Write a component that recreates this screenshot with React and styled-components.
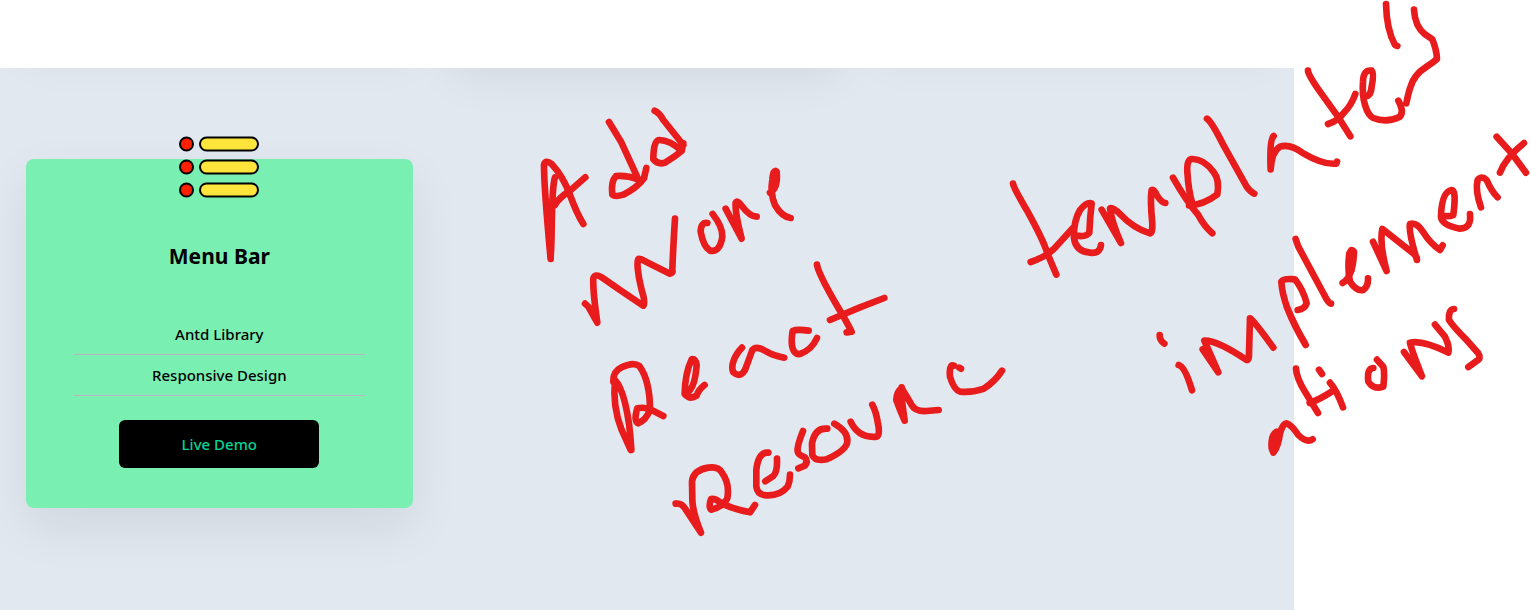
import React from "react";
import styled, { createGlobalStyle } from "styled-components";

const GlobalStyle = createGlobalStyle`
  *, *::before, *::after { box-sizing: border-box; }
  body {
    margin: 0;
    background: #ffffff;
    color: #000000;
    font-family: "Segoe UI", "Noto Sans", "Open Sans", sans-serif;
  }
`;

const Page = styled.div`
  position: relative;
  display: flex;
  flex-direction: column;
  min-height: 100vh;
  padding: 68px 237px 0 0;
  overflow: hidden;
`;

const Gallery = styled.main`
  flex: 1;
  padding: 0 28px 102px 26px;
  background: #e1e8f0;
  overflow: hidden;
`;

const CardRow = styled.div`
  display: grid;
  grid-template-columns: repeat(3, 1fr);
  column-gap: 40px;
  align-items: start;
`;

const UpperRow = styled(CardRow)`
  margin-top: -136px;
  margin-bottom: 107px;
`;

const CardBase = styled.article`
  border-radius: 8px;
  background: #7aefb2;
  box-shadow: 0 20px 50px rgba(0, 0, 0, 0.08);
`;

const UpperCard = styled(CardBase)`
  height: ${({ $tall }) => ($tall ? 120 : 100)}px;
`;

const Card = styled(CardBase)`
  display: flex;
  flex-direction: column;
  align-items: center;
  padding: 0 48px 40px;
`;

const CardIcon = styled.svg`
  width: 80px;
  height: 80px;
  margin-top: -32px;
`;

const Title = styled.h2`
  margin: 33px 0 42px;
  font-size: 21px;
  line-height: 32px;
  font-weight: 700;
`;

const Features = styled.ul`
  align-self: stretch;
  margin: 0 0 24px;
  padding: 0;
  list-style: none;
`;

const Feature = styled.li`
  padding: 8px 0;
  border-bottom: 1px solid #bdb3c2;
  font-size: 15px;
  line-height: 24px;
  font-weight: 500;
  text-align: center;
`;

const DemoButton = styled.button`
  width: 200px;
  height: 48px;
  border: 0;
  border-radius: 6px;
  background: #000000;
  color: #00d595;
  font: inherit;
  font-size: 15px;
  font-weight: 500;
  cursor: pointer;
`;

const Ink = styled.svg`
  position: absolute;
  top: 0;
  left: 0;
  width: 100%;
  pointer-events: none;
  fill: none;
  stroke: #e81c1c;
  stroke-width: 20;
  stroke-linecap: round;
  stroke-linejoin: round;
`;

const inkGroups = [
  {
    x: 520,
    y: 90,
    strokes: [
      "M92 507C82 400 72 280 72 225Q76 208 95 222Q130 260 150 315Q170 370 190 402",
      "M92 500C98 430 92 300 105 262M84 350L92 500M105 345Q115 325 150 302L196 262",
      "M267 96L303 155L355 268M355 268Q320 255 288 258Q272 275 277 314Q285 322 310 314Q350 295 372 265L379 234",
      "M404 62Q420 70 430 90L490 165M485 183Q450 150 418 150Q400 150 400 208Q415 225 435 218Q465 200 485 183L490 160",
      "M195 641L205 650L232 698Q218 600 220 565Q225 550 245 562L300 600L370 647Q378 640 365 600C352 550 350 510 355 507Q362 505 375 514L450 551Q460 550 457 540Q460 460 465 386",
      "M562 399Q543 395 542 425Q550 470 570 482Q600 488 607 440Q608 410 578 372",
      "M617 356L665 446Q645 370 647 338Q652 330 665 347Q690 380 710 380",
      "M750 308Q775 295 770 245Q760 235 757 270Q750 310 765 345Q785 380 812 384M766 245L757 295",
    ],
  },
  {
    x: 570,
    y: 250,
    strokes: [
      "M184 600C178 480 155 410 135 390C130 440 135 490 155 540L182 600",
      "M130 395Q128 365 155 352Q190 335 208 348C235 385 240 440 240 480Q228 510 205 520Q190 515 202 475Q225 470 245 480L280 498",
      "M355 425Q375 410 380 345Q377 325 365 328Q345 370 344 432Q360 450 380 437Q385 420 404 405",
      "M516 293C490 320 482 350 490 367Q510 385 525 360Q540 320 547 300Q560 285 590 305Q610 317 643 323",
      "M716 242Q680 237 668 243C660 290 670 315 690 312Q725 300 741 264",
      "M741 44Q745 70 800 165Q830 215 845 245L830 247M780 210L870 172L943 144",
    ],
  },
  {
    x: 650,
    y: 340,
    strokes: [
      "M77 491Q95 488 107 508L153 578Q125 510 127 470L126 425Q130 390 175 383Q205 378 215 397Q240 430 232 475Q220 500 183 509Q175 500 183 477Q195 475 212 488Q240 505 300 517L315 495",
      "M355 338Q325 335 319 390L319 440Q322 465 350 466Q390 468 413 440Q420 425 420 404M381 356Q383 395 370 408L346 424",
      "M459 273Q440 320 443 335Q445 345 465 352Q475 365 465 377L445 385",
      "M532 266Q495 262 486 310L487 345Q495 365 530 358Q590 330 592 305Q595 275 553 251",
      "M602 245Q625 295 680 290Q692 285 683 245Q678 215 667 194",
      "M764 242L755 175V142M763 240Q750 210 739 180Q740 155 755 145Q765 160 785 195Q795 215 830 213L866 210",
      "M912 77Q897 72 900 110Q912 150 930 155Q970 158 1000 147Q1035 125 1056 92M928 83L933 86",
    ],
  },
  {
    x: 990,
    y: 90,
    strokes: [
      "M69 281Q70 292 110 360Q160 450 172 490L199 554M122 516Q170 500 195 473L248 415",
      "M258 437Q290 442 298 428Q300 380 305 340Q290 335 270 360Q250 395 252 445Q258 485 300 488Q330 492 333 465",
      "M335 359L393 459Q365 395 360 355Q368 350 390 372Q430 415 480 430Q488 430 487 400Q480 330 485 300Q492 297 500 315Q515 338 526 339",
      "M549 263Q590 335 625 375Q640 405 667 430M597 346Q640 345 682 313Q690 270 670 245Q640 205 605 207Q590 210 592 245Q595 300 607 340",
      "M651 86Q665 95 700 165L770 290Q780 305 793 311",
    ],
  },
  {
    x: 1240,
    y: 0,
    strokes: [
      "M101 408Q88 420 92 508Q95 455 120 440Q150 430 190 460Q250 495 289 491L291 485",
      "M204 212Q205 225 240 275L296 353L331 409M264 372Q295 362 310 340Q335 315 346 282",
      "M375 287Q392 292 395 260Q403 220 395 212Q370 208 369 245C365 300 380 345 400 354Q440 370 480 350Q493 335 475 302",
      "M438 12Q440 90 465 135L472 138",
      "M522 29Q525 80 555 103L577 118Q590 150 591 177Q580 187 560 200Q520 225 510 265Q505 280 499 310",
    ],
  },
  {
    x: 1140,
    y: 120,
    strokes: [
      "M59 645Q58 660 73 671M116 735Q135 740 156 811",
      "M188 688L235 757L193 662Q230 660 320 720Q328 720 327 700L330 595Q340 600 400 683",
      "M497 675Q428 560 424 485Q430 475 465 478Q490 510 500 550Q495 567 473 570M495 670Q470 630 440 560",
      "M467 357L475 380L553 525Q565 550 573 551",
      "M608 489Q640 470 642 395Q635 385 628 400Q622 450 630 485Q650 515 670 510Q685 500 684 475M635 390V450",
      "M699 365L740 453Q718 370 727 327L820 400Q832 410 831 420Q805 335 810 312Q830 305 850 337Q870 370 900 390L908 376",
      "M910 288Q930 290 940 285Q950 210 935 210Q905 215 903 290Q905 315 960 326Q995 325 990 282",
      "M1023 262Q1005 210 1013 180Q1025 165 1040 180Q1055 215 1073 232",
      "M1070 50L1115 100L1158 158M1152 69Q1095 115 1080 158",
      "M700 744Q680 745 685 785Q700 810 730 800Q735 760 730 740L711 719",
      "M792 696L846 769Q815 690 810 668Q850 660 925 698Q930 680 915 650L885 614",
      "M942 567Q925 568 927 600Q940 620 975 655L1015 700Q1025 715 1010 723L985 741",
    ],
  },
  {
    x: 1240,
    y: 290,
    strokes: [
      "M110 425Q92 435 95 475L100 488Q115 470 120 430Q128 400 140 400Q155 405 175 435Q200 460 218 448M106 440L100 480",
      "M168 236Q170 265 195 305L234 369M209 339Q240 328 275 305",
      "M270 278Q290 300 309 352M237 239L246 252",
    ],
  },
];

function MenuIcon() {
  return (
    <CardIcon viewBox="0 0 80 80" aria-hidden="true">
      {[17, 40, 63].map((y) => (
        <g key={y} stroke="#000000" strokeWidth="2">
          <circle cx="7.5" cy={y} r="6.5" fill="#ff2000" />
          <rect x="21" y={y - 6.5} width="58" height="13" rx="6.5" fill="#ffe53b" />
        </g>
      ))}
    </CardIcon>
  );
}

function Annotation() {
  return (
    <Ink
      viewBox="0 0 1531 610"
      role="img"
      aria-label="Add more React resource templates implementations"
    >
      {inkGroups.map(({ x, y, strokes }) => (
        <g key={`${x}-${y}`} transform={`translate(${x} ${y}) scale(0.3333)`}>
          {strokes.map((d) => (
            <path key={d} d={d} />
          ))}
        </g>
      ))}
    </Ink>
  );
}

export default function App() {
  return (
    <>
      <GlobalStyle />
      <Page>
        <Gallery>
          <UpperRow aria-hidden="true">
            <UpperCard />
            <UpperCard $tall />
            <UpperCard />
          </UpperRow>
          <CardRow>
            <Card>
              <MenuIcon />
              <Title>Menu Bar</Title>
              <Features>
                <Feature>Antd Library</Feature>
                <Feature>Responsive Design</Feature>
              </Features>
              <DemoButton type="button">Live Demo</DemoButton>
            </Card>
          </CardRow>
        </Gallery>
        <Annotation />
      </Page>
    </>
  );
}
